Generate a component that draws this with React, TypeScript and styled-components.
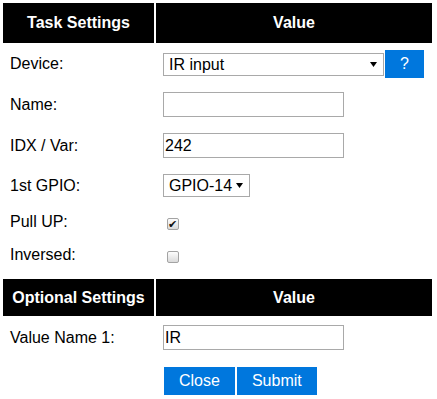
import React from 'react';
import styled, {createGlobalStyle} from 'styled-components';

const GlobalStyle = createGlobalStyle`
    body {
        margin: 0;
        background: #ffffff;
        font-family: "Liberation Sans", Arial, sans-serif;
        font-size: 16px;
        color: #000000;
    }
`

interface IRow {
    label: string,
    height: number,
    top?: boolean,
    children?: React.ReactNode,
}

const SettingRow = ({label, height, top, children}: IRow) => (
    <Row $h={height}>
        <Cell $top={top}>{label}</Cell>
        <Cell $top={top}>{children}</Cell>
    </Row>
)

const Arrow = () => (
    <ArrowIcon width="7" height="5" viewBox="0 0 7 5">
        <path d="M0 0 H7 L3.5 5 Z" fill="#000"/>
    </ArrowIcon>
)

const App = () => {
    return (
        <>
            <GlobalStyle/>
            <Table>
                <Row $h={40}>
                    <Head>Task Settings</Head>
                    <Head>Value</Head>
                </Row>

                <SettingRow label="Device:" height={38}>
                    <SelectWrap>
                        <Select $w={221} defaultValue="ir">
                            <option value="ir">IR input</option>
                        </Select>
                        <Arrow/>
                    </SelectWrap>
                    <Button $ml={1}>?</Button>
                </SettingRow>

                <SettingRow label="Name:" height={39}>
                    <TextInput defaultValue=""/>
                </SettingRow>

                <SettingRow label="IDX / Var:" height={39}>
                    <TextInput defaultValue="242"/>
                </SettingRow>

                <SettingRow label="1st GPIO:" height={37}>
                    <SelectWrap>
                        <Select $w={87} defaultValue="14">
                            <option value="14">GPIO-14</option>
                        </Select>
                        <Arrow/>
                    </SelectWrap>
                </SettingRow>

                <SettingRow label="Pull UP:" height={31} top>
                    <Check type="checkbox" defaultChecked/>
                </SettingRow>

                <SettingRow label="Inversed:" height={38} top>
                    <Check type="checkbox"/>
                </SettingRow>

                <Row $h={37}>
                    <Head>Optional Settings</Head>
                    <Head>Value</Head>
                </Row>

                <SettingRow label="Value Name 1:" height={39}>
                    <TextInput defaultValue="IR"/>
                </SettingRow>

                <Row $h={40}>
                    <Cell/>
                    <Cell $top $pt={8}>
                        <Button $ml={1}>Close</Button>
                        <Button $ml={2}>Submit</Button>
                    </Cell>
                </Row>
            </Table>
        </>
    );
};

export default App;

const Table = styled.div`
    display: flex;
    flex-direction: column;
    gap: 2px;
    padding: 3px;
`

const Row = styled.div<{ $h: number }>`
    display: grid;
    grid-template-columns: 151px 276px;
    column-gap: 2px;
    height: ${p => p.$h}px;
`

const Head = styled.div`
    background: #000000;
    color: #ffffff;
    font-weight: bold;
    display: flex;
    align-items: center;
    justify-content: center;
`

const Cell = styled.div<{ $top?: boolean, $pt?: number }>`
    display: flex;
    align-items: ${p => p.$top ? 'flex-start' : 'center'};
    padding: ${p => p.$top ? (p.$pt ?? 7) : 0}px 7px 0 7px;
    line-height: 18px;
    white-space: nowrap;
`

const SelectWrap = styled.div`
    position: relative;
    display: flex;
`

const Select = styled.select<{ $w: number }>`
    appearance: none;
    width: ${p => p.$w}px;
    height: 23px;
    margin: 0;
    padding: 0 0 0 5px;
    border: 1px solid #a9a9a9;
    border-radius: 0;
    background: #ffffff;
    color: #000000;
    font-family: inherit;
    font-size: 16px;
`

const ArrowIcon = styled.svg`
    position: absolute;
    right: 7px;
    top: 9px;
    pointer-events: none;
`

const TextInput = styled.input`
    box-sizing: border-box;
    width: 181px;
    height: 25px;
    margin: 0;
    padding: 0 1px;
    border: 1px solid #a9a9a9;
    font-family: inherit;
    font-size: 16px;
    color: #000000;
    outline: none;
`

const Check = styled.input`
    appearance: none;
    box-sizing: border-box;
    width: 12px;
    height: 12px;
    margin: 5px 0 0 4px;
    border: 1px solid #a3a3a3;
    border-radius: 2px;
    background: linear-gradient(#fdfdfd, #dadada);
    position: relative;

    &:checked::after {
        content: "✔";
        position: absolute;
        left: 0;
        top: -2px;
        font-size: 11px;
        line-height: 14px;
        color: #111111;
    }
`

const Button = styled.button<{ $ml: number }>`
    margin: 0 0 0 ${p => p.$ml}px;
    padding: 5px 15px;
    height: 28px;
    border: none;
    border-radius: 0;
    background: #0077dd;
    color: #ffffff;
    font-family: inherit;
    font-size: 16px;
    line-height: 18px;
`
